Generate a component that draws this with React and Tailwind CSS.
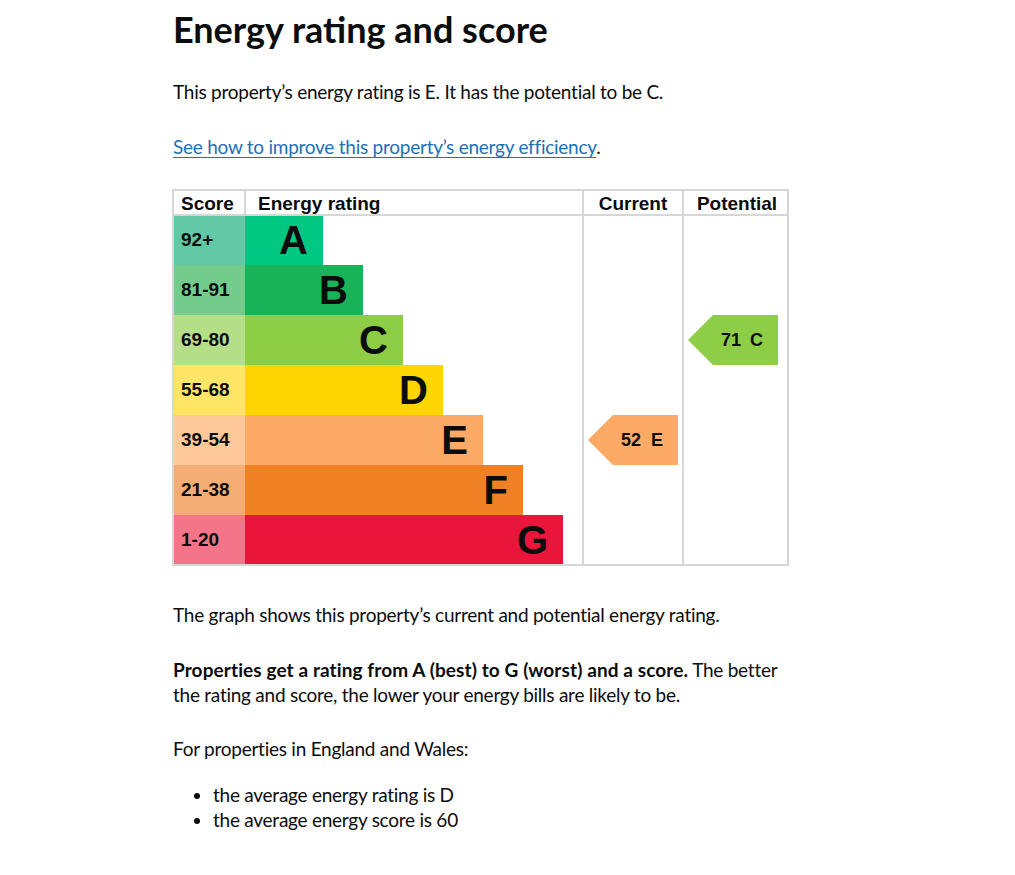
const bands = [
  { score: "92+", letter: "A", bar: "#00c781", light: "#63c8a5" },
  { score: "81-91", letter: "B", bar: "#19b459", light: "#73cb8c" },
  { score: "69-80", letter: "C", bar: "#8dce46", light: "#b5de88" },
  { score: "55-68", letter: "D", bar: "#ffd500", light: "#ffe566" },
  { score: "39-54", letter: "E", bar: "#fcaa65", light: "#fec89b" },
  { score: "21-38", letter: "F", bar: "#ef8023", light: "#f4ad75" },
  { score: "1-20", letter: "G", bar: "#e9153b", light: "#f4758a" },
];

const line = "#d6d6d6";

// arrow pointing left, drawn inside a column; row = band index
const Arrow = ({ row, left, right, value, letter, fill }) => {
  const top = 25 + row * 50;
  const mid = top + 25;
  const corner = left + 25;
  return (
    <g>
      <polygon
        points={`${left},${mid} ${corner},${top} ${right},${top} ${right},${top + 50} ${corner},${top + 50}`}
        fill={fill}
      />
      <text x={corner + 8} y={top + 31} fontSize="18" fontWeight="700" fill="#0b0c0c">
        {value}
      </text>
      <text x={right - 15} y={top + 31} fontSize="18" fontWeight="700" textAnchor="end" fill="#0b0c0c">
        {letter}
      </text>
    </g>
  );
};

const RatingChart = () => (
  <svg
    width="617"
    height="377"
    viewBox="-1 -1 617 377"
    className="block -ml-px font-['Liberation_Sans',Arial,sans-serif]"
    aria-label="Energy rating chart"
  >
    {/* header */}
    <text x="8" y="20" fontSize="19" fontWeight="700" fill="#0b0c0c">
      Score
    </text>
    <text x="85" y="20" fontSize="19" fontWeight="700" fill="#0b0c0c">
      Energy rating
    </text>
    <text x="460" y="20" fontSize="19" fontWeight="700" textAnchor="middle" fill="#0b0c0c">
      Current
    </text>
    <text x="564" y="20" fontSize="19" fontWeight="700" textAnchor="middle" fill="#0b0c0c">
      Potential
    </text>

    {/* bands */}
    {bands.map((b, i) => {
      const y = 25 + i * 50;
      const end = 150 + i * 40;
      return (
        <g key={b.letter}>
          <rect x="0" y={y} width="72" height="50" fill={b.light} />
          <rect x="72" y={y} width={end - 72} height="50" fill={b.bar} />
          <text x="8" y={y + 31} fontSize="19" fontWeight="700" fill="#0b0c0c">
            {b.score}
          </text>
          <text x={end - 15} y={y + 39} fontSize="40" fontWeight="700" textAnchor="end" fill="#0b0c0c">
            {b.letter}
          </text>
        </g>
      );
    })}

    {/* grid */}
    <rect x="0" y="0" width="615" height="375" fill="none" stroke={line} strokeWidth="2" />
    <line x1="0" y1="25" x2="615" y2="25" stroke={line} strokeWidth="2" />
    <line x1="72" y1="0" x2="72" y2="25" stroke={line} strokeWidth="2" />
    <line x1="410" y1="0" x2="410" y2="375" stroke={line} strokeWidth="2" />
    <line x1="510" y1="0" x2="510" y2="375" stroke={line} strokeWidth="2" />

    <Arrow row={4} left={415} right={505} value="52" letter="E" fill="#fcaa65" />
    <Arrow row={2} left={515} right={605} value="71" letter="C" fill="#8dce46" />
  </svg>
);

const App = () => {
  return (
    <div className="min-h-screen bg-white text-[#0b0c0c] font-['Lato',sans-serif]">
      <main className="ml-[173px] w-[625px] pt-[9px] pb-10">
        <h1 className="text-[36px] leading-[40px] font-bold mb-[30px]">
          Energy rating and score
        </h1>
        <p className="text-[19px] leading-[25px] tracking-[-0.25px] mb-[30px]">
          This property’s energy rating is E. It has the potential to be C.
        </p>
        <p className="text-[19px] leading-[25px] tracking-[-0.25px] mb-[30px]">
          <a
            href="#improve"
            className="text-[#1d70b8] underline decoration-1 underline-offset-[3px]"
          >
            See how to improve this property’s energy efficiency
          </a>
          .
        </p>

        <RatingChart />

        <p className="text-[19px] leading-[25px] tracking-[-0.25px] mt-[36px] mb-[30px]">
          The graph shows this property’s current and potential energy rating.
        </p>
        <p className="text-[19px] leading-[25px] tracking-[-0.25px] mb-[29px]">
          <strong className="font-bold tracking-[0.1px]">
            Properties get a rating from A (best) to G (worst) and a score.
          </strong>{" "}
          The better the rating and score, the lower your energy bills are
          likely to be.
        </p>
        <p className="text-[19px] leading-[25px] tracking-[-0.25px] mb-[21px]">
          For properties in England and Wales:
        </p>
        <ul className="list-disc pl-10 text-[19px] leading-[25px] tracking-[-0.25px]">
          <li>the average energy rating is D</li>
          <li>the average energy score is 60</li>
        </ul>
      </main>
    </div>
  );
};

export default App;
